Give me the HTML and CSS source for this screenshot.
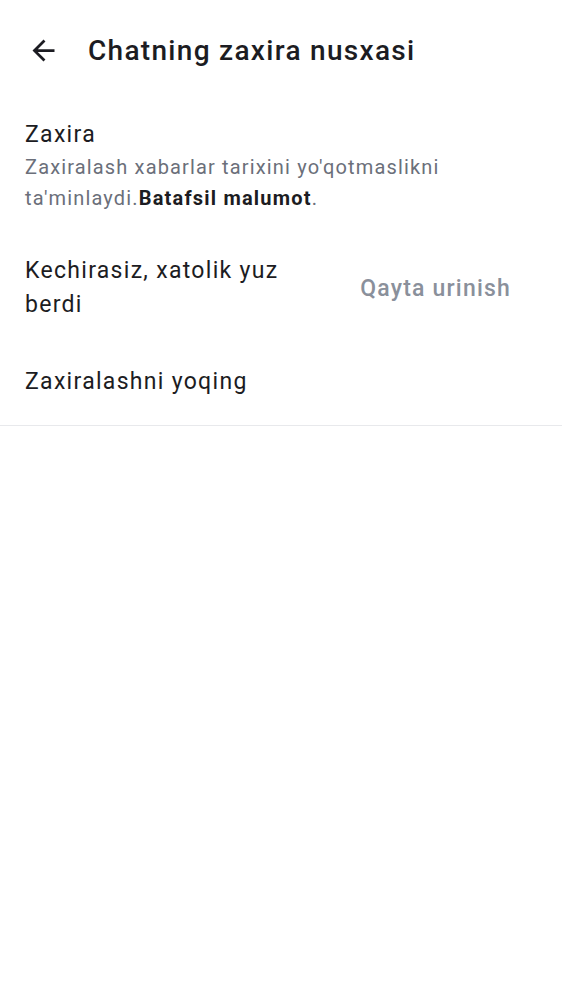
FILE: index.html
```html
<!DOCTYPE html>
<html>
<head>
<meta charset="utf-8">
<link rel="stylesheet" href="styles.css">
</head>
<body>
<header class="appbar">
  <button class="back" aria-label="Orqaga">
    <svg width="33" height="33" viewBox="0 0 24 24"><path d="M20 11H7.83l5.59-5.59L12 4l-8 8 8 8 1.41-1.41L7.83 13H20v-2z" fill="#1c1c22"/></svg>
  </button>
  <h1 class="title">Chatning zaxira nusxasi</h1>
</header>
<main class="content">
  <section class="item">
    <div class="item-title">Zaxira</div>
    <div class="item-sub">Zaxiralash xabarlar tarixini yo'qotmaslikni ta'minlaydi.<b>Batafsil malumot</b>.</div>
  </section>
  <section class="row">
    <div class="row-text">Kechirasiz, xatolik yuz berdi</div>
    <div class="retry">Qayta urinish</div>
  </section>
  <section class="item single">
    <div class="item-title">Zaxiralashni yoqing</div>
  </section>
</main>
</body>
</html>
```
FILE: styles.css
```css
* { box-sizing: border-box; }
body {
  margin: 0;
  background: #fff;
  font-family: Roboto, "Noto Sans", sans-serif;
  color: #1c1c22;
}
.appbar {
  display: flex;
  align-items: center;
  height: 100px;
  padding-left: 27px;
}
.back {
  border: 0;
  background: none;
  padding: 0;
  width: 33px;
  height: 33px;
  display: flex;
}
.title {
  margin: 0 0 0 28px;
  font-size: 28px;
  font-weight: 500;
  letter-spacing: 1.3px;
}
.content {
  border-bottom: 1px solid #e8e9ec;
}
.item {
  padding: 18px 25px 20px;
}
.item-title {
  font-size: 23px;
  line-height: 34px;
  letter-spacing: 1.3px;
}
.item-sub {
  font-size: 20px;
  line-height: 31px;
  letter-spacing: 1.15px;
  color: #6b6f7a;
  max-width: 450px;
}
.item-sub b { color: #1c1c22; font-weight: 700; letter-spacing: 1.2px; }
.row {
  display: flex;
  align-items: center;
  justify-content: space-between;
  padding: 20px 51px 20px 25px;
}
.row-text {
  font-size: 23px;
  line-height: 34px;
  letter-spacing: 1.3px;
  max-width: 290px;
}
.retry {
  font-size: 23px;
  font-weight: 500;
  letter-spacing: 1.2px;
  color: #8a909b;
}
.item.single { padding: 23px 25px 26px; }
```
